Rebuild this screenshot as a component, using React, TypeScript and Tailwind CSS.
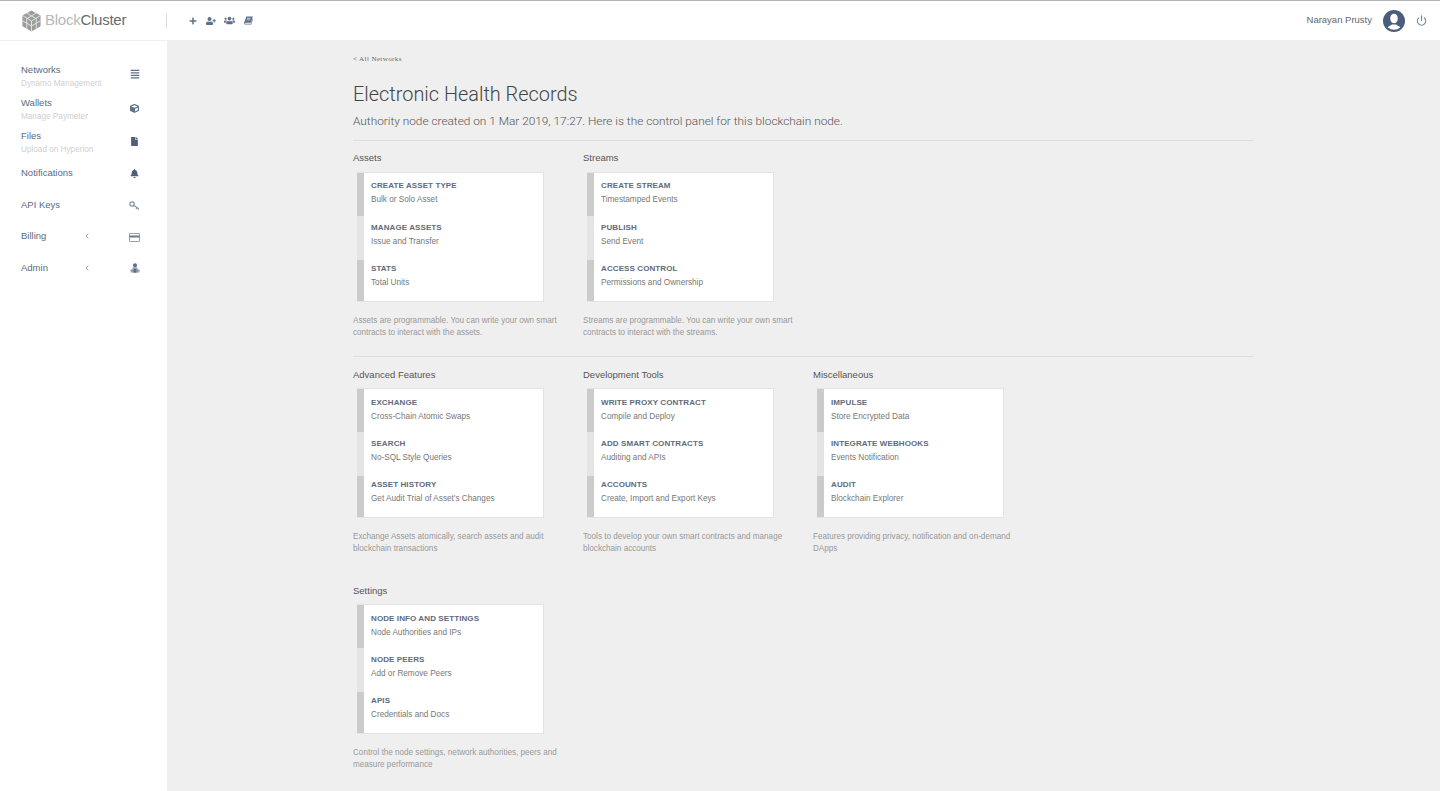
import { ChevronLeft, Power } from "lucide-react";
import { FaAlignJustify, FaBell, FaCube, FaFile, FaPlus, FaUserPlus, FaUsers } from "react-icons/fa";
import type { ReactNode } from "react";

type Row = { title: string; sub: string };
type Section = { heading: string; rows: Row[]; note: string[] };

function BookIcon() {
  return (
    <svg width="9" height="9" viewBox="0 0 9 9">
      <path d="M2.300 0.500H8.800L7 6.800H1.700c-.7 0-.9.900-.2.900H7l1.500-5 .4.500L7.300 8.500H1.500C.400 8.500-.100 7.400.200 6.400z" fill="currentColor" />
      <path d="M3 2.300h3.600M2.700 3.800h3.500" stroke="#fff" strokeWidth="0.600" />
    </svg>
  );
}

function KeyIcon() {
  return (
    <svg width="11" height="9" viewBox="0 0 11 9" fill="none" stroke="currentColor">
      <circle cx="3" cy="3" r="2.200" strokeWidth="1.300" />
      <path d="M4.700 4.300L9.800 7.800M8 6.600L7 8M9.500 7.600L8.800 8.700" strokeWidth="1.200" />
    </svg>
  );
}

function AdminIcon() {
  return (
    <svg width="10" height="10" viewBox="0 0 10 10">
      <circle cx="5" cy="2.300" r="2" fill="#5f7088" />
      <path d="M2.800 4.400h4.400l.6 1.200H2.200z" fill="#5f7088" />
      <circle cx="2.200" cy="7.800" r="1.900" fill="#97a2b2" />
      <circle cx="7.800" cy="7.800" r="1.900" fill="#97a2b2" />
      <rect x="3.400" y="5.600" width="3.200" height="4.200" fill="#5f7088" />
    </svg>
  );
}

function CardIcon() {
  return (
    <svg width="11" height="9" viewBox="0 0 11 9">
      <rect x="0.400" y="0.400" width="10.200" height="8.200" rx="0.800" fill="none" stroke="currentColor" strokeWidth="0.800" />
      <rect x="0.500" y="2.500" width="10" height="2" fill="currentColor" />
    </svg>
  );
}

const NAV: { label: string; sub?: string; icon: ReactNode; caret?: boolean; cls: string; iconCls: string }[] = [
  { label: "Networks", sub: "Dynamo Management", icon: <FaAlignJustify size={10} />, cls: "h-[33px]", iconCls: "mt-[5px] text-[#5f7088]" },
  { label: "Wallets", sub: "Manage Paymeter", icon: <FaCube size={9} />, cls: "h-[33px]", iconCls: "mt-[6px] text-[#5f7088]" },
  { label: "Files", sub: "Upload on Hyperion", icon: <FaFile size={9} />, cls: "h-[37px]", iconCls: "mt-[6px] text-[#4f5f78]" },
  { label: "Notifications", icon: <FaBell size={9} />, cls: "h-[32px]", iconCls: "mt-[1px] text-[#4f5f78]" },
  { label: "API Keys", icon: <KeyIcon />, cls: "h-[31px]", iconCls: "mt-[1px] text-[#8a96a8]" },
  { label: "Billing", icon: <CardIcon />, caret: true, cls: "h-[32px]", iconCls: "mt-[2px] text-[#6a7a90]" },
  { label: "Admin", icon: <AdminIcon />, caret: true, cls: "h-[32px]", iconCls: "mt-[1px]" },
];

const ROW1: Section[] = [
  {
    heading: "Assets",
    rows: [
      { title: "CREATE ASSET TYPE", sub: "Bulk or Solo Asset" },
      { title: "MANAGE ASSETS", sub: "Issue and Transfer" },
      { title: "STATS", sub: "Total Units" },
    ],
    note: ["Assets are programmable. You can write your own smart", "contracts to interact with the assets."],
  },
  {
    heading: "Streams",
    rows: [
      { title: "CREATE STREAM", sub: "Timestamped Events" },
      { title: "PUBLISH", sub: "Send Event" },
      { title: "ACCESS CONTROL", sub: "Permissions and Ownership" },
    ],
    note: ["Streams are programmable. You can write your own smart", "contracts to interact with the streams."],
  },
];

const ROW2: Section[] = [
  {
    heading: "Advanced Features",
    rows: [
      { title: "EXCHANGE", sub: "Cross-Chain Atomic Swaps" },
      { title: "SEARCH", sub: "No-SQL Style Queries" },
      { title: "ASSET HISTORY", sub: "Get Audit Trial of Asset's Changes" },
    ],
    note: ["Exchange Assets atomically, search assets and audit", "blockchain transactions"],
  },
  {
    heading: "Development Tools",
    rows: [
      { title: "WRITE PROXY CONTRACT", sub: "Compile and Deploy" },
      { title: "ADD SMART CONTRACTS", sub: "Auditing and APIs" },
      { title: "ACCOUNTS", sub: "Create, Import and Export Keys" },
    ],
    note: ["Tools to develop your own smart contracts and manage", "blockchain accounts"],
  },
  {
    heading: "Miscellaneous",
    rows: [
      { title: "IMPULSE", sub: "Store Encrypted Data" },
      { title: "INTEGRATE WEBHOOKS", sub: "Events Notification" },
      { title: "AUDIT", sub: "Blockchain Explorer" },
    ],
    note: ["Features providing privacy, notification and on-demand", "DApps"],
  },
];

const ROW3: Section[] = [
  {
    heading: "Settings",
    rows: [
      { title: "NODE INFO AND SETTINGS", sub: "Node Authorities and IPs" },
      { title: "NODE PEERS", sub: "Add or Remove Peers" },
      { title: "APIS", sub: "Credentials and Docs" },
    ],
    note: ["Control the node settings, network authorities, peers and", "measure performance"],
  },
];

function Logo() {
  return (
    <div className="flex items-center">
      <svg width="21" height="22" viewBox="0 0 22 23" className="mr-[3px]">
        <path d="M11 0.500l9.500 5.200v11.200L11 22.500 1.500 16.900V5.700z" fill="#9c9c9c" />
        <path d="M11 11.500l9.500-5.800M11 11.500L1.500 5.700M11 11.500v11M6 3.200l9.500 5.600M16 3.200L6.500 8.800M6 8.500v11M16 8.500v11M1.500 11.200l9.500 5.500 9.500-5.500" stroke="#e4e4e4" strokeWidth="1" fill="none" />
      </svg>
      <span className="text-[15px] tracking-[-0.25px] text-[#b8b8b8]">
        Block<span className="text-[#6a6a6a]">Cluster</span>
      </span>
    </div>
  );
}

function Avatar() {
  return (
    <svg width="22" height="22" viewBox="0 0 22 22">
      <defs>
        <clipPath id="avatar-clip">
          <circle cx="11" cy="11" r="8.800" />
        </clipPath>
      </defs>
      <circle cx="11" cy="11" r="11" fill="#4a5d7c" />
      <g clipPath="url(#avatar-clip)" fill="#fff">
        <ellipse cx="11" cy="8.500" rx="3.800" ry="4.800" />
        <path d="M3 22c0-5 3.500-6 6-7.500h4c2.500 1.500 6 2.500 6 7.500z" />
      </g>
    </svg>
  );
}

function Card({ section, low }: { section: Section; low?: boolean }) {
  return (
    <div className="w-[230px]">
      <h3 className="text-[9.500px] leading-[12px] text-[#555]">{section.heading}</h3>
      <div className={`ml-1 flex h-[130px] w-[187px] border border-[#e3e3e3] border-l-0 bg-white ${low ? "mt-[7px]" : "mt-[8px]"}`}>
        <div className="flex w-[7px] flex-col">
          <div className="h-[43px] bg-[#cbcbcb]" />
          <div className="h-[44px] bg-[#e4e4e4]" />
          <div className="flex-1 bg-[#cbcbcb]" />
        </div>
        <div className={`pl-[7px] ${low ? "pt-[9px]" : "pt-[8px]"}`}>
          {section.rows.map((row, i) => (
            <div key={row.title} className={low && i === 0 ? "h-[40.500px]" : "h-[41.500px]"}>
              <div className="whitespace-nowrap text-[8px] font-bold leading-[10px] tracking-[0.1px] text-[#626a7c]">{row.title}</div>
              <div className="mt-[4px] whitespace-nowrap text-[8.200px] leading-[10px] text-[#777]">{row.sub}</div>
            </div>
          ))}
        </div>
      </div>
      <div className="mt-[13px] text-[8.150px] leading-[12px] text-[#999]">
        {section.note.map((line) => (
          <div key={line} className="whitespace-nowrap">{line}</div>
        ))}
      </div>
    </div>
  );
}

export default function App() {
  return (
    <div className="flex h-[791px] flex-col overflow-hidden bg-[#efefef] font-['Liberation_Sans',sans-serif]">
      {/* Top bar */}
      <header className="flex h-[41px] shrink-0 items-center border-t border-t-[#b4b4b4] border-b border-b-[#efefef] bg-white pl-[21px] pr-[13px]">
        <Logo />
        <div className="ml-[40px] h-[15px] border-l border-[#dcdcdc]" />
        <div className="ml-[17px] flex items-center text-[#5f7088]">
          <span className="flex w-[18px] justify-center"><FaPlus size={8} /></span>
          <span className="flex w-[18px] justify-center"><FaUserPlus size={10} /></span>
          <span className="flex w-[19px] justify-center"><FaUsers size={11} /></span>
          <span className="flex w-[18px] justify-center"><BookIcon /></span>
        </div>
        <span className="ml-auto text-[9.500px] text-[#666]">Narayan Prusty</span>
        <div className="ml-[11px]"><Avatar /></div>
        <Power size={11} strokeWidth={2.500} className="ml-[11px] text-[#6b84a0]" />
      </header>

      <div className="flex min-h-0 flex-1">
        {/* Sidebar */}
        <aside className="w-[167px] shrink-0 bg-white pl-[21px] pt-[23px]">
          {NAV.map((item) => (
            <div key={item.label} className={`flex w-[119px] ${item.cls}`}>
              <div className="flex-1">
                <div className="text-[9.500px] leading-[12px] text-[#5b6b80]">{item.label}</div>
                {item.sub && <div className="mt-[3px] whitespace-nowrap text-[8.200px] leading-[10px] text-[#d0d0d0]">{item.sub}</div>}
              </div>
              {item.caret && <ChevronLeft size={8} className="mr-[38px] mt-[2px] text-[#5b6b80]" />}
              <div className={`flex h-[10px] w-[11px] items-center justify-center ${item.iconCls}`}>{item.icon}</div>
            </div>
          ))}
        </aside>

        {/* Main */}
        <main className="flex-1 pl-[186px] pt-[14px]">
          <div className="w-[900px]">
            <a className="block font-['Liberation_Serif',serif] text-[7px] leading-[8px] tracking-[0.4px] text-[#666]">&lt; All Networks</a>
            <h1 className="mt-[15px] font-['Roboto',sans-serif] text-[19.900px] font-light leading-[34px] text-[#444]">Electronic Health Records</h1>
            <p className="-mt-px font-['Roboto',sans-serif] text-[11.830px] font-light leading-[20px] text-[#555]">
              Authority node created on 1 Mar 2019, 17:27. Here is the control panel for this blockchain node.
            </p>
            <div className="mt-[9px] border-t border-[#dddddd]" />
            <div className="mt-[11px] flex">
              {ROW1.map((s) => <Card key={s.heading} section={s} />)}
            </div>
            <div className="mt-[17px] border-t border-[#dddddd]" />
            <div className="mt-[12px] flex">
              {ROW2.map((s) => <Card key={s.heading} section={s} low />)}
            </div>
            <div className="mt-[30px] flex">
              {ROW3.map((s) => <Card key={s.heading} section={s} low />)}
            </div>
          </div>
        </main>
      </div>
    </div>
  );
}
